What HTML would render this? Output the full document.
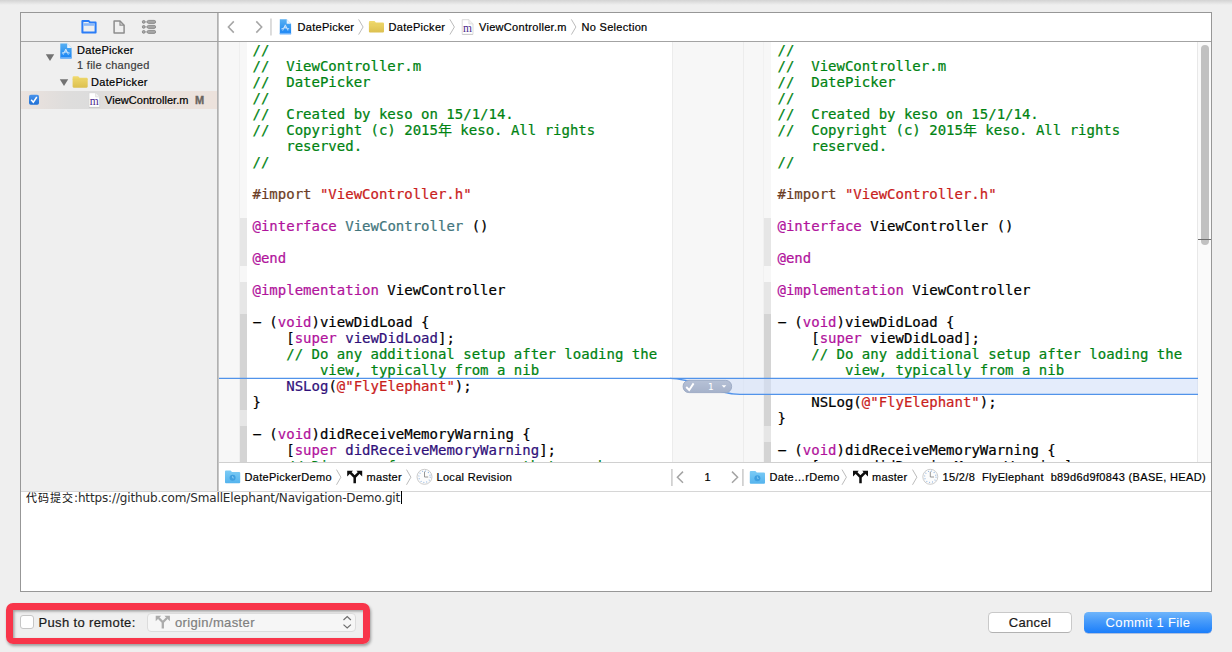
<!DOCTYPE html>
<html lang="en">
<head>
<meta charset="utf-8">
<title>Commit</title>
<style>
*{box-sizing:border-box;margin:0;padding:0}
html,body{width:1232px;height:652px;overflow:hidden}
body{background:#efefef;font-family:"Liberation Sans","Noto Sans CJK SC",sans-serif;font-size:11px;color:#000;position:relative}
.abs{position:absolute}
#topshade{left:0;top:0;width:1232px;height:5px;background:linear-gradient(#d3d3d3,#efefef)}
#panel{left:20px;top:12px;width:1192px;height:580px;border:1px solid #979797;background:#fff}
#sidebar{left:21px;top:13px;width:197px;height:478px;background:#efefef}
#sidehead{left:21px;top:13px;width:197px;height:28px;background:#efefef}
#headline{left:21px;top:41px;width:1190px;height:1px;background:#a3a3a3}
#vdiv{left:217px;top:13px;width:2px;height:478px;background:linear-gradient(90deg,#b0b0b0 50%,#c6c6c6 50%)}
#jump{left:219px;top:13px;width:992px;height:28px;background:#fff}
.t11{font-size:11px;line-height:14px;white-space:nowrap;letter-spacing:0.3px;-webkit-text-stroke:0.2px}
#selrow{left:21px;top:91px;width:197px;height:18px;background:linear-gradient(90deg,#ebe3df 0%,#e6e0dd 10%,#dedddc 24%,#dcdcdc 36%,#e3dfdc 48%,#ebe2dd 60%,#ece2dc 100%)}
/* code */
.pane{top:42px;height:420px;overflow:hidden;background:#fff}
.code{position:absolute;top:0;font-family:"DejaVu Sans Mono","Liberation Mono","Noto Sans CJK SC",monospace;font-size:14px;line-height:16px;white-space:pre;color:#000;letter-spacing:0;-webkit-text-stroke:0.22px}
.c{color:#008312}.k{color:#b1139c}.s{color:#c9211c}.p{color:#6b3d25}.t{color:#43767d}.f{color:#31107a}
.d{display:inline-block;transform:scaleX(2.1);transform-origin:50% 50%}
.gut{background:#f7f7f7}
.rib{position:absolute;width:7px}
#rpane .rib{width:7.3px}
.t13{letter-spacing:0.36px;-webkit-text-stroke:0.2px}
#botbar{left:219px;top:463px;width:992px;height:28px;background:#fff}
#botline{left:21px;top:491px;width:1190px;height:1px;background:#d6d6d6}
#msg{left:21px;top:492px;width:1190px;height:99px;background:#fff}
</style>
</head>
<body>
<div class="abs" id="topshade"></div>
<div class="abs" id="panel"></div>
<div class="abs" id="sidebar"></div>
<div class="abs" id="sidehead"></div>
<div class="abs" id="jump"></div>


<!-- sidebar toolbar icons -->
<svg class="abs" style="left:78px;top:16px" width="84" height="22" viewBox="78 16 84 22">
  <!-- folder -->
  <path d="M82.4 32.5 V21.1 H88.8 L90 22.4 H95.6 V32.5 Z" fill="none" stroke="#2b7df7" stroke-width="2" stroke-linejoin="round"/>
  <rect x="83.4" y="23.2" width="11.2" height="2.6" fill="#8cb9f8"/>
  <!-- doc -->
  <path d="M114.1 20.9 H120 L124.1 25.2 V32.9 H114.1 Z" fill="none" stroke="#8d8d8d" stroke-width="1.5" stroke-linejoin="round"/>
  <path d="M120 20.9 V25.2 H124.1" fill="none" stroke="#8d8d8d" stroke-width="1.2"/>
  <!-- list -->
  <g fill="#a6a6a6" stroke="#888" stroke-width="0.9">
    <circle cx="143.7" cy="21.9" r="1.4"/><rect x="147.2" y="20.4" width="8.4" height="3" rx="1.4"/>
    <circle cx="143.7" cy="26.9" r="1.4"/><rect x="147.2" y="25.4" width="8.4" height="3" rx="1.4"/>
    <circle cx="143.7" cy="31.9" r="1.4"/><rect x="147.2" y="30.4" width="8.4" height="3" rx="1.4"/>
  </g>
  <path d="M145 21.9H147 M145 26.9H147 M145 31.9H147" stroke="#999" stroke-width="0.8"/>
</svg>

<!-- sidebar tree -->
<div class="abs" id="selrow"></div>
<svg class="abs" style="left:21px;top:42px" width="197" height="70" viewBox="21 42 197 70">
  <defs>
    <linearGradient id="gproj" x1="0" y1="0" x2="0" y2="1"><stop offset="0" stop-color="#58b0f3"/><stop offset="0.45" stop-color="#3a9cf1"/><stop offset="1" stop-color="#1a84f5"/></linearGradient>
    <linearGradient id="gfold" x1="0" y1="0" x2="0" y2="1"><stop offset="0" stop-color="#f1da6e"/><stop offset="1" stop-color="#dcc04f"/></linearGradient>
    <linearGradient id="gchk" x1="0" y1="0" x2="0" y2="1"><stop offset="0" stop-color="#4a93ea"/><stop offset="1" stop-color="#1f6fd6"/></linearGradient>
  </defs>
  <path d="M45.8 54.2 H54.2 L50 61 Z" fill="#727272"/>
  <path d="M59.8 79.2 H68.2 L64 86 Z" fill="#727272"/>
  <!-- project icon -->
  <g id="projicon">
    <path d="M60.3 43.4 H67.2 L71.6 47.9 V58.4 H60.3 Z" fill="url(#gproj)"/>
    <path d="M67.2 43.4 V47.9 H71.6 Z" fill="#eaf4fd"/>
    <rect x="60.3" y="57.1" width="11.3" height="1.3" fill="#6db2fa"/>
    <path d="M63.2 54.8 L65.8 49 L68.4 54.8 M62.4 53.6 L62.4 52.4 M62.4 53 L64.2 52.3 Q65.8 51.5 67.4 52.3 L69.2 53 M69.2 52.4 V53.6" fill="none" stroke="#e3f0fd" stroke-width="0.7"/>
    <circle cx="65.8" cy="51.3" r="0.9" fill="none" stroke="#e3f0fd" stroke-width="0.55"/>
  </g>
  <!-- folder icon -->
  <g id="foldicon">
    <path d="M72.6 77.4 Q72.6 76.3 73.7 76.3 H78.2 L79.6 77.8 H86.6 Q87.7 77.8 87.7 78.9 V86.6 Q87.7 87.7 86.6 87.7 H73.7 Q72.6 87.7 72.6 86.6 Z" fill="url(#gfold)"/>
    <path d="M72.6 79.3 H87.7" stroke="#e6cf62" stroke-width="0.6"/>
  </g>
  <!-- checkbox -->
  <rect x="29" y="94.8" width="10" height="10" rx="1.8" fill="url(#gchk)"/>
  <path d="M31.2 99.8 L33.3 102.2 L36.8 97" fill="none" stroke="#fff" stroke-width="1.5"/>
  <!-- m file icon -->
  <g id="micon">
    <path d="M88.9 92.7 H95.6 L99.7 96.9 V107.3 H88.9 Z" fill="#fff" stroke="#d6d6d6" stroke-width="0.9" stroke-linejoin="round"/>
    <path d="M89 107.5 H99.6" stroke="#c4c4c4" stroke-width="0.7"/>
    <path d="M95.6 92.7 V96.9 H99.7" fill="#f3f3f3" stroke="#d9d9d9" stroke-width="0.7"/>
    <text x="94.3" y="105" font-family="Liberation Serif,serif" font-size="11.5" fill="#4b2a8c" text-anchor="middle">m</text>
  </g>
</svg>
<div class="abs t11" style="left:77px;top:43px">DatePicker</div>
<div class="abs t11" style="left:77px;top:58px;color:#3c3c3c">1 file changed</div>
<div class="abs t11" style="left:91px;top:75px">DatePicker</div>
<div class="abs t11" style="left:105px;top:93px;letter-spacing:0.03px">ViewController.m</div>
<div class="abs t11" style="left:195px;top:93px;color:#696561;font-weight:bold;-webkit-text-stroke:0.35px">M</div>

<!-- jump bar -->
<svg class="abs" style="left:219px;top:13px" width="500" height="28" viewBox="219 13 500 28">
  <path d="M233.8 21.4 L228.4 27 L233.8 32.6" fill="none" stroke="#a6a6a6" stroke-width="1.55"/>
  <path d="M256.3 21.4 L261.7 27 L256.3 32.6" fill="none" stroke="#a6a6a6" stroke-width="1.55"/>
  <rect x="270" y="18.5" width="1.9" height="17" fill="#dbdbdb"/>
  <use href="#projicon" transform="translate(219.5,-24.2)"/>
  <path d="M358.6 19.4 L363.1 27 L358.6 34.6" fill="none" stroke="#a9a9a9" stroke-width="0.8"/>
  <use href="#foldicon" transform="translate(296.3,-55.2)"/>
  <path d="M449.9 19.4 L454.4 27 L449.9 34.6" fill="none" stroke="#a9a9a9" stroke-width="0.8"/>
  <use href="#micon" transform="translate(373.3,-73)"/>
  <path d="M571.4 19.4 L575.9 27 L571.4 34.6" fill="none" stroke="#a9a9a9" stroke-width="0.8"/>
</svg>
<div class="abs t11" style="left:297.5px;top:20px">DatePicker</div>
<div class="abs t11" style="left:388.5px;top:20px">DatePicker</div>
<div class="abs t11" style="left:479px;top:20px">ViewController.m</div>
<div class="abs t11" style="left:581.5px;top:20px">No Selection</div>

<!-- code panes -->
<div class="abs pane" id="lpane" style="left:219px;width:454px">
  <div class="abs gut" style="left:0;top:0;width:20px;height:420px"></div>
  <div class="abs" style="left:20px;top:0;width:1px;height:420px;background:#efefef"></div>
  <div class="abs" style="left:21px;top:0;width:7px;height:420px;background:#f7f7f7"></div>
  <div class="rib" style="left:21px;top:176px;height:48px;background:#e6e6e6"></div>
  <div class="rib" style="left:21px;top:240px;height:180px;background:#e6e6e6"></div>
  <div class="rib" style="left:21px;top:272px;height:96px;background:#d4d4d4"></div>
  <div class="rib" style="left:21px;top:384px;height:36px;background:#d4d4d4"></div>
<div class="code" style="left:33.5px"><span class="c">//</span>
<span class="c">//  ViewController.m</span>
<span class="c">//  DatePicker</span>
<span class="c">//</span>
<span class="c">//  Created by keso on 15/1/14.</span>
<span class="c">//  Copyright (c) 2015年 keso. All rights</span>
<span class="c">    reserved.</span>
<span class="c">//</span>

<span class="p">#import </span><span class="s">"ViewController.h"</span>

<span class="k">@interface</span> <span class="t">ViewController</span> ()

<span class="k">@end</span>

<span class="k">@implementation</span> ViewController

<span class="d">-</span> (<span class="k">void</span>)viewDidLoad {
    [<span class="k">super</span> <span class="f">viewDidLoad</span>];
    <span class="c">// Do any additional setup after loading the</span>
<span class="c">        view, typically from a nib</span>
    <span class="f">NSLog</span>(<span class="s">@"FlyElephant"</span>);
}

<span class="d">-</span> (<span class="k">void</span>)didReceiveMemoryWarning {
    [<span class="k">super</span> <span class="f">didReceiveMemoryWarning</span>];
    <span class="c">// Dispose of any resources that can be</span></div>
</div>

<div class="abs gut" id="midgut" style="left:672px;top:42px;width:93px;height:420px"></div>
<div class="abs" style="left:672px;top:42px;width:1px;height:420px;background:#ececec"></div>
<div class="abs" style="left:743px;top:42px;width:1px;height:420px;background:#ececec"></div>
<div class="abs" style="left:763px;top:42px;width:1px;height:420px;background:#f1f1f1"></div>

<div class="abs pane" id="rpane" style="left:764px;width:434px">
  <div class="abs" style="left:0;top:0;width:7.3px;height:420px;background:#f7f7f7"></div>
  <div class="rib" style="left:0;top:176px;height:48px;background:#e6e6e6"></div>
  <div class="rib" style="left:0;top:240px;height:180px;background:#e6e6e6"></div>
  <div class="rib" style="left:0;top:272px;height:112px;background:#d4d4d4"></div>
  <div class="rib" style="left:0;top:400px;height:20px;background:#d4d4d4"></div>
<div class="code" style="left:13.5px"><span class="c">//</span>
<span class="c">//  ViewController.m</span>
<span class="c">//  DatePicker</span>
<span class="c">//</span>
<span class="c">//  Created by keso on 15/1/14.</span>
<span class="c">//  Copyright (c) 2015年 keso. All rights</span>
<span class="c">    reserved.</span>
<span class="c">//</span>

<span class="p">#import </span><span class="s">"ViewController.h"</span>

<span class="k">@interface</span> ViewController ()

<span class="k">@end</span>

<span class="k">@implementation</span> ViewController

<span class="d">-</span> (<span class="k">void</span>)viewDidLoad {
    [<span class="k">super</span> viewDidLoad];
    <span class="c">// Do any additional setup after loading the</span>
<span class="c">        view, typically from a nib</span>

    NSLog(<span class="s">@"FlyElephant"</span>);
}

<span class="d">-</span> (<span class="k">void</span>)didReceiveMemoryWarning {
    [<span class="k">super</span> didReceiveMemoryWarning];</div>
</div>

<!-- scrollbar -->
<div class="abs" style="left:1197px;top:42px;width:14px;height:420px;background:#fafafa;border-left:1px solid #e8e8e8"></div>
<div class="abs" style="left:1201.2px;top:45px;width:7.4px;height:200px;border-radius:4px;background:#c1c1c1"></div>
<div class="abs" style="left:1198px;top:239px;width:13px;height:1px;background:#6e6e6e"></div>

<!-- diff band -->
<svg class="abs" style="left:219px;top:372px" width="979" height="30" viewBox="219 372 979 30">
  <defs><linearGradient id="gpill" x1="0" y1="0" x2="0" y2="1"><stop offset="0" stop-color="#b6c1d6"/><stop offset="1" stop-color="#a6b2ca"/></linearGradient></defs>
  <path d="M670 378.4 C695 378.4 715 394.3 740 394.3 H1198 V378.4 Z" fill="#d3e0f8" fill-opacity="0.62"/>
  <path d="M219 378.4 H1198" stroke="#5193ea" stroke-width="1.25" fill="none"/>
  <path d="M670 378.4 C695 378.4 715 394.3 740 394.3 H1198" stroke="#5193ea" stroke-width="1.25" fill="none"/>
  <rect x="683.1" y="380.4" width="48.5" height="12.2" rx="5.8" fill="url(#gpill)" stroke="#9aa8c3" stroke-width="0.9"/>
  <path d="M686.2 387 L689.2 390 L693.6 383.4" stroke="#fff" stroke-width="1.9" fill="none"/>
  <path d="M721.7 385.2 H726.3 L724 387.7 Z" fill="#fff"/>
  <text x="710.8" y="390" text-anchor="middle" font-family="DejaVu Sans,Liberation Sans,sans-serif" font-size="9" fill="#fff">1</text>
</svg>

<div class="abs" id="vdiv"></div>
<div class="abs" id="headline"></div>
<div class="abs" style="left:219px;top:462px;width:992px;height:1px;background:#d0d0d0"></div>
<div class="abs" id="botbar"></div>
<div class="abs" id="botline"></div>
<div class="abs" id="msg"></div>


<!-- bottom bar -->
<svg class="abs" style="left:219px;top:463px" width="992" height="28" viewBox="219 463 992 28">
  <defs>
    <linearGradient id="gbf" x1="0" y1="0" x2="0" y2="1"><stop offset="0" stop-color="#7ccbf5"/><stop offset="1" stop-color="#55b4ee"/></linearGradient>
  </defs>
  <g id="bfold">
    <path d="M225 471.4 Q225 470.4 226 470.4 H230.6 L232 471.9 H239.2 Q240.2 471.9 240.2 472.9 V482.2 Q240.2 483.2 239.2 483.2 H226 Q225 483.2 225 482.2 Z" fill="url(#gbf)"/>
    <circle cx="232.6" cy="477.8" r="3" fill="#3f9fe0"/>
    <path d="M232.6 476 V477.9 H234" fill="none" stroke="#8fd0f6" stroke-width="0.8"/>
  </g>
  <g id="bchev"><path d="M336.5 469.6 L340.9 477.2 L336.5 484.8" fill="none" stroke="#a9a9a9" stroke-width="0.8"/></g>
  <g id="bbranch">
    <path d="M354.7 483.2 V477 L350.3 472.6 M354.7 477 L359.1 472.6" fill="none" stroke="#0d0d0d" stroke-width="2.5"/>
    <path d="M347.2 470.7 H353 L347.2 476.5 Z M362.2 470.7 H356.4 L362.2 476.5 Z" fill="#0d0d0d"/>
  </g>
  <use href="#bchev" transform="translate(70,0)"/>
  <g id="bclock">
    <circle cx="424.5" cy="476.8" r="7.5" fill="#fcfcfc" stroke="#c6c6c6" stroke-width="0.9"/>
    <circle cx="424.5" cy="476.8" r="5.7" fill="none" stroke="#7ea9dc" stroke-width="1.1" stroke-dasharray="0.8 2.184"/>
    <path d="M424.5 471.6 V477 H428.2" fill="none" stroke="#8b8b8b" stroke-width="0.9"/>
  </g>
  <!-- stepper -->
  <rect x="671.2" y="469" width="1.4" height="17" fill="#c6c6c6"/>
  <path d="M683 471.6 L677.4 477.2 L683 482.8" fill="none" stroke="#a4a4a4" stroke-width="1.5"/>
  <path d="M732 471.6 L737.6 477.2 L732 482.8" fill="none" stroke="#a4a4a4" stroke-width="1.5"/>
  <rect x="742.2" y="469" width="1.4" height="17" fill="#c6c6c6"/>
  <use href="#bfold" transform="translate(524.8,0.5)"/>
  <use href="#bchev" transform="translate(505.5,0)"/>
  <use href="#bbranch" transform="translate(505.8,0)"/>
  <use href="#bchev" transform="translate(576,0)"/>
  <use href="#bclock" transform="translate(505.8,0)"/>
</svg>
<div class="abs t11" style="left:244.5px;top:470px">DatePickerDemo</div>
<div class="abs t11" style="left:366.5px;top:470px">master</div>
<div class="abs t11" style="left:436.5px;top:470px">Local Revision</div>
<div class="abs t11" style="left:704.5px;top:470px">1</div>
<div class="abs t11" style="left:769.5px;top:470px">Date…rDemo</div>
<div class="abs t11" style="left:872px;top:470px">master</div>
<div class="abs t11" style="left:942.5px;top:470px;white-space:pre;letter-spacing:0.345px">15/2/8  FlyElephant  b89d6d9f0843 (BASE, HEAD)</div>

<!-- commit message -->
<div class="abs m" style="left:26px;top:489px;font-size:12px;line-height:16px;white-space:nowrap;font-family:'Liberation Sans','Noto Sans CJK SC',sans-serif;color:#111"><span style="font-size:11px;letter-spacing:1px;position:relative;top:0.5px">代码提交</span><span id="lat" style="font-family:'DejaVu Sans','Liberation Sans',sans-serif;font-size:12px;letter-spacing:-0.14px;position:relative;top:1px;color:#2b2b2b">:https://github.com/SmallElephant/Navigation-Demo.git</span></div>
<div class="abs" style="left:401px;top:491px;width:1px;height:13px;background:#000"></div>

<!-- bottom controls -->
<div class="abs" style="left:6px;top:603px;width:363.5px;height:41.3px;border:solid #f8354a;border-width:7px 7px 6.5px 7px;border-radius:7px;box-shadow:1px 2px 3px rgba(0,0,0,0.35), inset 1.5px 1.5px 2.5px rgba(0,0,0,0.33)"></div>
<div class="abs" style="left:20px;top:615px;width:14px;height:14px;border-radius:3px;background:#fff;border:1px solid #c6c6c6"></div>
<div class="abs t13" style="left:38.5px;top:614.5px;font-size:13px;line-height:16px;white-space:nowrap;color:#1a1a1a">Push to remote:</div>
<div class="abs" style="left:147px;top:613px;width:208.5px;height:18.5px;border-radius:4px;background:#f6f6f6;border:1px solid #dcdcdc"></div>
<svg class="abs" style="left:150px;top:612px" width="210" height="22" viewBox="150 612 210 22">
  <path d="M162.8 628.4 V622.2 L158.6 618 M162.8 622.2 L167 618" fill="none" stroke="#ababab" stroke-width="2.3"/>
  <path d="M155.7 615.8 H161.2 L155.7 621.3 Z M169.9 615.8 H164.4 L169.9 621.3 Z" fill="#ababab"/>
  <path d="M343.5 620 L347.2 616.6 L350.9 620 M343.5 624.6 L347.2 628 L350.9 624.6" fill="none" stroke="#6e6e6e" stroke-width="1.2"/>
</svg>
<div class="abs t13" style="left:175px;top:614.5px;font-size:13px;line-height:16px;white-space:nowrap;color:#808080">origin/master</div>

<div class="abs" style="left:988px;top:612px;width:84px;height:21px;border-radius:4.5px;background:#fff;border:1px solid #c9c9c9;border-bottom-color:#b2b2b2"></div>
<div class="abs t13" style="left:988px;top:615px;width:84px;text-align:center;font-size:13px;line-height:16px;color:#1a1a1a">Cancel</div>
<div class="abs" style="left:1084px;top:612px;width:128px;height:21px;border-radius:4.5px;background:linear-gradient(#6fb5fb,#4a9dfa 40%,#1b7efb);box-shadow:0 0.5px 0.5px rgba(10,70,180,0.55)"></div>
<div class="abs t13" style="left:1084px;top:615px;width:128px;text-align:center;font-size:13px;line-height:16px;color:#fff;-webkit-text-stroke:0.05px">Commit 1 File</div>

</body>
</html>
